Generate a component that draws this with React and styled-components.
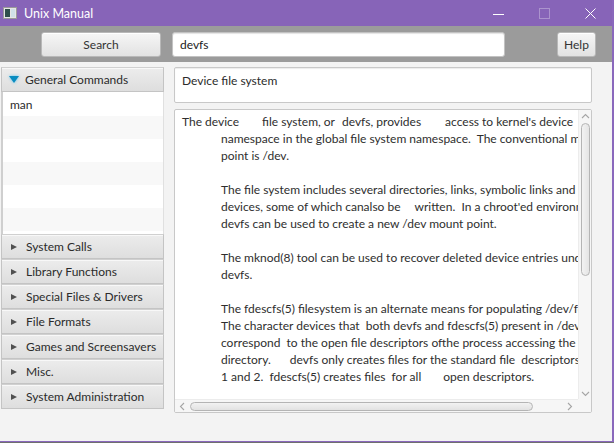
import React from "react";
import styled, { createGlobalStyle } from "styled-components";

const GlobalStyle = createGlobalStyle`
    html, body {
        margin: 0;
        padding: 0;
        background: #6f6f6f;
        overflow: hidden;
    }
    * { box-sizing: border-box; }
`;

const FONT = `"Lato", "Liberation Sans", sans-serif`;

const sections = [
    "System Calls",
    "Library Functions",
    "Special Files & Drivers",
    "File Formats",
    "Games and Screensavers",
    "Misc.",
    "System Administration",
];

// man page text, numbers are blank runs in px
const pageLines = [
    { indent: false, parts: ["The device", 23, "file system, or", 7, "devfs, provides", 24, "access to kernel's device"] },
    { indent: true, parts: ["namespace in the global file system namespace.  The conventional mount"] },
    { indent: true, parts: ["point is /dev."] },
    { indent: true, parts: [""] },
    { indent: true, parts: ["The file system includes several directories, links, symbolic links and"] },
    { indent: true, parts: ["devices, some of which canalso be", 14, "written.  In a chroot'ed environment,"] },
    { indent: true, parts: ["devfs can be used to create a new /dev mount point."] },
    { indent: true, parts: [""] },
    { indent: true, parts: ["The mknod(8) tool can be used to recover deleted device entries under"] },
    { indent: true, parts: ["devfs."] },
    { indent: true, parts: [""] },
    { indent: true, parts: ["The fdescfs(5) filesystem is an alternate means for populating /dev/fd."] },
    { indent: true, parts: ["The character devices that  both devfs and fdescfs(5) present in /dev/fd"] },
    { indent: true, parts: ["correspond  to the open file descriptors ofthe process accessing the"] },
    { indent: true, parts: ["directory.", 19, "devfs only creates files for the standard file  descriptors 0,"] },
    { indent: true, parts: ["1 and 2.  fdescfs(5) creates files  for all", 22, "open descriptors."] },
];

function AppIcon() {
    return (
        <svg width="14" height="12" viewBox="0 0 14 12">
            <rect x="0.5" y="0.5" width="13" height="11" fill="#e6e6e6" stroke="#9a9a9a" />
            <rect x="2" y="2" width="5" height="8" fill="#2f4f4b" />
            <rect x="8" y="2" width="4" height="8" fill="#cfe0e8" />
        </svg>
    );
}

function Chevron({ dir }) {
    const pts = {
        up: "1,6 4.5,2.5 8,6",
        down: "1,3 4.5,6.5 8,3",
        left: "6,1 2.5,4.5 6,8",
        right: "3,1 6.5,4.5 3,8",
    }[dir];
    return (
        <svg width="9" height="9" viewBox="0 0 9 9">
            <polyline points={pts} fill="none" stroke="#a6a6a6" strokeWidth="1.1" />
        </svg>
    );
}

function App() {
    return (
        <>
            <GlobalStyle />
            <Window>
                <TitleBar>
                    <AppIcon />
                    <Title>Unix Manual</Title>
                    <WinButtons>
                        <WinBtn>
                            <svg width="11" height="11" viewBox="0 0 11 11">
                                <line x1="0" y1="6.5" x2="11" y2="6.5" stroke="#fff" strokeWidth="1" />
                            </svg>
                        </WinBtn>
                        <WinBtn $dim>
                            <svg width="11" height="11" viewBox="0 0 11 11">
                                <rect x="0.5" y="0.5" width="10" height="10" fill="none" stroke="#fff" strokeWidth="1" />
                            </svg>
                        </WinBtn>
                        <WinBtn>
                            <svg width="11" height="11" viewBox="0 0 11 11">
                                <path d="M0.5 0.5 L10.5 10.5 M10.5 0.5 L0.5 10.5" stroke="#fff" strokeWidth="1" />
                            </svg>
                        </WinBtn>
                    </WinButtons>
                </TitleBar>

                <Toolbar>
                    <Button $width={120}>Search</Button>
                    <SearchField>devfs</SearchField>
                    <Button $width={39} $push>Help</Button>
                </Toolbar>

                <Main>
                    <Sidebar>
                        <PaneHeader $open>
                            <OpenArrow />
                            General Commands
                        </PaneHeader>
                        <CommandList>
                            {["man", "", "", "", "", ""].map((c, i) => (
                                <ListRow key={i} $odd={i % 2 === 1}>{c}</ListRow>
                            ))}
                        </CommandList>
                        {sections.map((s) => (
                            <PaneHeader key={s}>
                                <ClosedArrow />
                                {s}
                            </PaneHeader>
                        ))}
                    </Sidebar>

                    <Content>
                        <Summary>Device file system</Summary>
                        <PageBox>
                            <PageText>
                                {pageLines.map((l, i) => (
                                    <Line key={i} $indent={l.indent}>
                                        {l.parts.map((p, j) =>
                                            typeof p === "number" ? <Blank key={j} $w={p} /> : <span key={j}>{p}</span>
                                        )}
                                    </Line>
                                ))}
                            </PageText>
                            <VScroll>
                                <Chevron dir="up" />
                                <VThumb />
                                <Chevron dir="down" />
                            </VScroll>
                            <HScroll>
                                <Chevron dir="left" />
                                <HThumb />
                                <Chevron dir="right" />
                            </HScroll>
                            <Corner />
                        </PageBox>
                    </Content>
                </Main>
            </Window>
        </>
    );
}

const Window = styled.div`
    width: 614px;
    height: 442px;
    display: flex;
    flex-direction: column;
    background: #f3f3f3;
    border-right: 2px solid #8a68bc;
    border-bottom: 1px solid #8a68bc;
    font-family: ${FONT};
    font-size: 12px;
    color: #333;
`;

const TitleBar = styled.div`
    height: 26px;
    flex: none;
    display: flex;
    align-items: center;
    padding-left: 3px;
    background: #8764b8;
    color: #fff;
`;

const Title = styled.span`
    margin-left: 7px;
    font-size: 12.5px;
`;

const WinButtons = styled.div`
    margin-left: auto;
    display: flex;
    margin-right: 16px;
    gap: 35px;
`;

const WinBtn = styled.div`
    width: 11px;
    height: 11px;
    display: flex;
    opacity: ${(p) => (p.$dim ? 0.3 : 1)};
`;

const Toolbar = styled.div`
    height: 36px;
    flex: none;
    display: flex;
    align-items: center;
    padding-left: 41px;
    padding-top: 1px;
    background: #9b9b9b;
`;

const Button = styled.div`
    width: ${(p) => p.$width}px;
    height: 25px;
    margin-left: ${(p) => (p.$push ? "52px" : "0")};
    display: flex;
    align-items: center;
    justify-content: center;
    border: 1px solid #b8b8b8;
    border-radius: 3px;
    background: linear-gradient(#f6f6f6, #e2e2e2);
    box-shadow: inset 0 1px 0 #fff;
    color: #333;
`;

const SearchField = styled.div`
    width: 333px;
    height: 25px;
    margin-left: 11px;
    padding-left: 7px;
    display: flex;
    align-items: center;
    background: #fff;
    border: 1px solid #c2c2c2;
    border-radius: 3px;
    box-shadow: inset 0 1px 1px #e4e4e4;
    color: #222;
`;

const Main = styled.div`
    flex: 1;
    display: flex;
    align-items: flex-start;
    padding: 5px 0 0 1px;
`;

const Sidebar = styled.div`
    width: 163px;
    display: flex;
    flex-direction: column;
`;

const PaneHeader = styled.div`
    height: 25px;
    flex: none;
    display: flex;
    align-items: center;
    padding-left: ${(p) => (p.$open ? "7px" : "9px")};
    gap: ${(p) => (p.$open ? "6px" : "9px")};
    background: linear-gradient(#ececec, #dedede);
    border: 1px solid #c4c4c4;
    border-top-color: #d0d0d0;
    box-shadow: inset 0 1px 0 #f8f8f8;
    color: #2b2b2b;
`;

const OpenArrow = styled.span`
    width: 0;
    height: 0;
    border-left: 5px solid transparent;
    border-right: 5px solid transparent;
    border-top: 7px solid #0a8cc0;
    filter: drop-shadow(0 0 1.5px #5fc5ee);
`;

const ClosedArrow = styled.span`
    width: 0;
    height: 0;
    border-top: 3.5px solid transparent;
    border-bottom: 3.5px solid transparent;
    border-left: 6px solid #505050;
`;

const CommandList = styled.div`
    height: 142px;
    flex: none;
    display: flex;
    flex-direction: column;
    border-left: 2px solid #cfcfcf;
    border-right: 1px solid #e0e0e0;
    background: #fff;
    padding-top: 1px;
`;

const ListRow = styled.div`
    height: 23px;
    flex: none;
    padding-left: 7px;
    display: flex;
    align-items: center;
    background: ${(p) => (p.$odd ? "#f8f8f8" : "#fff")};
    color: #2b2b2b;
`;

const Content = styled.div`
    width: 418px;
    margin-left: 10px;
    display: flex;
    flex-direction: column;
    gap: 6px;
`;

const Summary = styled.div`
    height: 36px;
    padding: 5px 7px;
    background: #fff;
    border: 1px solid #c8c8c8;
    border-radius: 2px;
    box-shadow: inset 0 1px 1px #ececec;
    color: #2b2b2b;
`;

const PageBox = styled.div`
    height: 304px;
    display: grid;
    grid-template-columns: 1fr 13px;
    grid-template-rows: 1fr 13px;
    background: #fff;
    border: 1px solid #c8c8c8;
    border-radius: 2px;
    overflow: hidden;
`;

const PageText = styled.div`
    overflow: hidden;
    padding: 3px 0 0 7px;
    white-space: pre;
    line-height: 17px;
    color: #2e2e2e;
`;

const Line = styled.div`
    height: 17px;
    padding-left: ${(p) => (p.$indent ? "39px" : "0")};
`;

const Blank = styled.span`
    display: inline-block;
    width: ${(p) => p.$w}px;
`;

const VScroll = styled.div`
    display: flex;
    flex-direction: column;
    align-items: center;
    padding: 2px 0 1px;
    background: #f6f6f6;
    border-left: 1px solid #ececec;
    svg { flex: none; }
`;

const VThumb = styled.div`
    width: 9px;
    height: 153px;
    margin: 2px 0 auto;
    border: 1px solid #b4b4b4;
    border-radius: 5px;
    background: linear-gradient(90deg, #f2f2f2, #e4e4e4);
`;

const HScroll = styled.div`
    display: flex;
    align-items: center;
    padding: 0 4px 0 3px;
    background: #f6f6f6;
    border-top: 1px solid #ececec;
    svg { flex: none; }
`;

const HThumb = styled.div`
    width: 343px;
    height: 9px;
    margin: 0 auto 0 3px;
    border: 1px solid #b4b4b4;
    border-radius: 5px;
    background: linear-gradient(#f2f2f2, #e2e2e2);
`;

const Corner = styled.div`
    background: #f6f6f6;
`;

export default App;
